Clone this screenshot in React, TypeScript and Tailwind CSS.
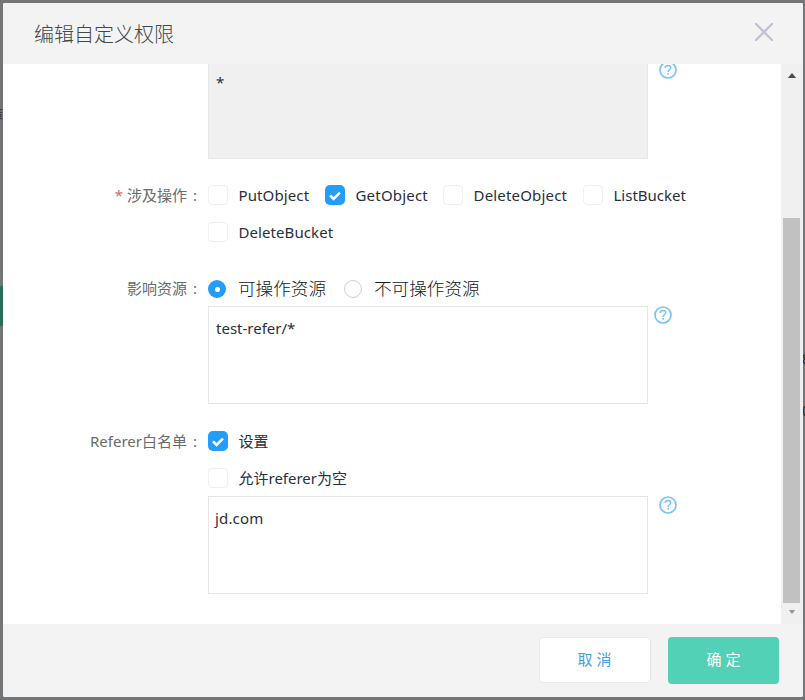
import type { ReactNode } from "react";

function HelpIcon({ className = "" }: { className?: string }) {
  return (
    <svg viewBox="0 0 18 18" className={`h-[18px] w-[18px] shrink-0 ${className}`} fill="none">
      <circle cx="9" cy="9" r="8" stroke="#79c3fa" strokeWidth="1.7" />
      <path d="M6.2 6.9C6.2 5.3 7.4 4.4 9 4.4s2.7.9 2.7 2.4c0 1.9-2.5 2-2.5 4.1" stroke="#79c3fa" strokeWidth="1.5" />
      <path d="M9.2 12v1.7" stroke="#79c3fa" strokeWidth="1.6" />
    </svg>
  );
}

function Check({ checked = false }: { checked?: boolean }) {
  return checked ? (
    <span className="flex h-5 w-5 shrink-0 items-center justify-center rounded-[5px] bg-[#249cfa]">
      <svg viewBox="0 0 20 20" className="h-5 w-5" fill="none">
        <path d="M5 10.4l3.6 3.6 6.3-6.4" stroke="#fff" strokeWidth="2.5" />
      </svg>
    </span>
  ) : (
    <span className="h-5 w-5 shrink-0 rounded-[4px] border border-[#efeff1] bg-white" />
  );
}

function Option({ checked, width, children }: { checked?: boolean; width: string; children: ReactNode }) {
  return (
    <label className={`flex h-5 shrink-0 items-center gap-[10.5px] whitespace-nowrap ${width}`}>
      <Check checked={checked} />
      <span>{children}</span>
    </label>
  );
}

function Label({ required, children }: { required?: boolean; children: ReactNode }) {
  return (
    <div className="flex h-5 w-[205px] shrink-0 items-center justify-end whitespace-nowrap pr-[10px] text-[#686a6d]">
      {required && <span className="mr-1 text-[#d9686a]">*</span>}
      <span>{children}</span>
      <span className="ml-[6px] w-[5px]">:</span>
    </div>
  );
}

function Radio({ checked }: { checked?: boolean }) {
  return checked ? (
    <span className="flex h-[18px] w-[18px] shrink-0 items-center justify-center rounded-full bg-[#249cfa]">
      <span className="h-[5px] w-[5px] rounded-full bg-white" />
    </span>
  ) : (
    <span className="h-[18px] w-[18px] shrink-0 rounded-full border border-[#cfd0d8] bg-white" />
  );
}

export default function App() {
  return (
    <div className="relative h-[700px] w-[805px] overflow-hidden bg-[#747577] font-['Noto_Sans','Noto_Sans_CJK_SC',sans-serif] text-[15px] leading-5 text-[#292f3d]">
      <div className="absolute left-0 top-[286px] h-[40px] w-[3px] bg-[#286e5b]" />
      <div className="absolute left-[-9px] top-[109px] text-[12px] leading-3 text-[#303640]">策</div>
      <div className="absolute left-[802px] top-[352px] text-[14px] leading-[14px] text-[#25282c]">8</div>
      <div className="absolute left-[802px] top-[404px] text-[14px] leading-[14px] text-[#25282c]">0</div>

      <div className="absolute left-[3px] top-[3px] flex h-[694px] w-[799.5px] flex-col overflow-hidden rounded-[2px] bg-white">
        <header className="flex h-[60.5px] shrink-0 items-center justify-between bg-[#f3f3f3] pl-[31px] pr-[30px]">
          <h1 className="mt-[3px] text-[20px] font-light leading-[30px] text-[#434548]">编辑自定义权限</h1>
          <svg viewBox="0 0 18 18" className="mb-[2px] h-[18px] w-[18px]" fill="none">
            <path d="M1 1l16 16M17 1L1 17" stroke="#bdc4d2" strokeWidth="2.4" strokeLinecap="round" />
          </svg>
        </header>

        <div className="flex h-[560px] shrink-0">
          <main className="h-[560px] w-[778px] shrink-0 overflow-hidden">
            <div className="flex h-[95.5px] pl-[205px]">
              <div className="h-[95.5px] w-[440px] border border-t-0 border-[#e6e6e6] bg-[#f0f0f0] px-[7px] pt-[8px]">*</div>
              <HelpIcon className="-mt-[3px] ml-[10.5px]" />
            </div>

            <div className="mt-[26px] flex">
              <Label required>涉及操作</Label>
              <div className="flex w-[540px] flex-wrap gap-y-[17px]">
                <Option width="w-[117px]"><span className="tracking-[0.12px]">PutObject</span></Option>
                <Option width="w-[118px]" checked><span className="tracking-[0.2px]">GetObject</span></Option>
                <Option width="w-[140px]"><span className="tracking-[0.18px]">DeleteObject</span></Option>
                <Option width="w-[120px]">ListBucket</Option>
                <Option width="w-[130px]"><span className="tracking-[0.08px]">DeleteBucket</span></Option>
              </div>
            </div>

            <div className="mt-[37px] flex">
              <div className="-mt-px"><Label>影响资源</Label></div>
              <div className="-mt-px flex h-5 items-center text-[17.6px] font-light text-[#111723]">
                <span className="mt-[2px] flex"><Radio checked /></span>
                <span className="ml-[12px] w-[106px]">可操作资源</span>
                <span className="mt-[2px] flex"><Radio /></span>
                <span className="ml-[12px]">不可操作资源</span>
              </div>
            </div>
            <div className="mt-[8px] flex pl-[205px]">
              <div className="h-[98px] w-[440px] border border-[#e6e6e6] px-[7px] pt-[11px]">test-refer/*</div>
              <HelpIcon className="ml-[5.5px]" />
            </div>

            <div className="mt-[27px] flex">
              <Label>Referer白名单</Label>
              <div className="flex flex-col gap-[17px]">
                <Option checked width="w-[200px]">设置</Option>
                <Option width="w-[200px]">允许referer为空</Option>
              </div>
            </div>
            <div className="mt-[8px] flex pl-[205px]">
              <div className="h-[98px] w-[440px] border border-[#e6e6e6] px-[6px] pt-[11px]"><span className="tracking-[0.15px]">jd.com</span></div>
              <HelpIcon className="ml-[10.5px]" />
            </div>
          </main>
          <div className="flex w-[21.5px] flex-col items-center bg-[#f0f0f0]">
            <svg viewBox="0 0 10 6" className="mt-[9.5px] h-[5px] w-[10px]"><path d="M0 6l5-6 5 6z" fill="#4c4c4c" /></svg>
            <div className="mt-[140px] h-[385px] w-[17px] bg-[#c1c1c1]" />
            <svg viewBox="0 0 8 5" className="mt-[7px] h-[4px] w-[8px]"><path d="M0 0l4 5 4-5z" fill="#959595" /></svg>
          </div>
        </div>

        <footer className="flex h-[73.5px] items-start justify-end gap-[17px] bg-[#f3f3f3] pr-[23.5px] pt-[13.5px]">
          <button className="h-[46px] w-[112px] rounded-[4px] border border-[#e6e8ea] bg-white pb-[2px] pl-[3px] tracking-[4px] text-[#3e9fe6]">取消</button>
          <button className="-mt-[0.5px] h-[47px] w-[111px] rounded-[4px] bg-[#52d1b6] pb-[2px] pl-[4px] tracking-[4px] text-white">确定</button>
        </footer>
      </div>
    </div>
  );
}
